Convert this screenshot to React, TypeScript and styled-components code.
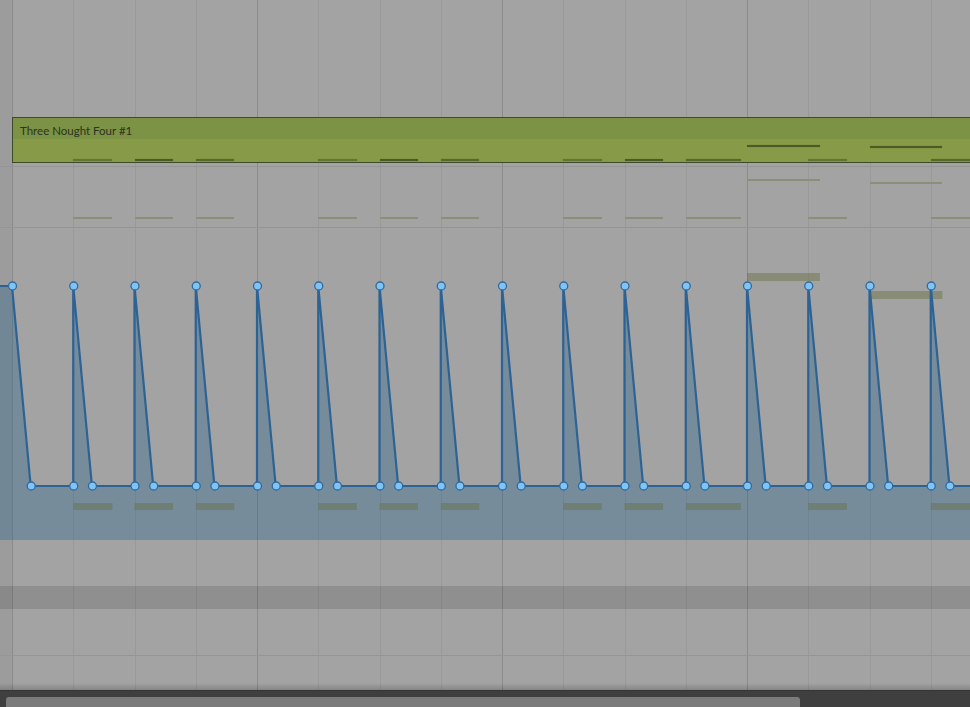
import React from 'react';
import styled, { createGlobalStyle } from 'styled-components';

const BEAT = 61.25;
const ORIGIN = 12;
const WIDTH = 970;

const GlobalStyle = createGlobalStyle`
  html, body {
    margin: 0;
    padding: 0;
    background: #a3a3a3;
    overflow: hidden;
  }
  #root {
    width: ${WIDTH}px;
    height: 707px;
  }
`;

type Note = { beat: number; len: number; pitch: 'low' | 'high' | 'higher'; vel: number };

const notes: Note[] = [
  { beat: 1, len: 0.64, pitch: 'low', vel: 0.6 },
  { beat: 2, len: 0.63, pitch: 'low', vel: 1 },
  { beat: 3, len: 0.63, pitch: 'low', vel: 0.8 },
  { beat: 5, len: 0.63, pitch: 'low', vel: 0.6 },
  { beat: 6, len: 0.63, pitch: 'low', vel: 1 },
  { beat: 7, len: 0.63, pitch: 'low', vel: 0.8 },
  { beat: 9, len: 0.63, pitch: 'low', vel: 0.6 },
  { beat: 10, len: 0.63, pitch: 'low', vel: 1 },
  { beat: 11, len: 0.9, pitch: 'low', vel: 0.8 },
  { beat: 12, len: 1.19, pitch: 'high', vel: 1 },
  { beat: 13, len: 0.63, pitch: 'low', vel: 0.6 },
  { beat: 14, len: 1.19, pitch: 'higher', vel: 1 },
  { beat: 15, len: 0.9, pitch: 'low', vel: 0.8 },
];

const Arrangement = styled.div`
  width: ${WIDTH}px;
  height: 707px;
  display: flex;
  flex-direction: column;
  background-color: #a3a3a3;
  background-image:
    linear-gradient(to right, #9c9c9c 0, #9c9c9c ${ORIGIN}px, transparent ${ORIGIN}px),
    linear-gradient(to right,
      #8b8b8b 0, #8b8b8b 1px, transparent 1px,
      transparent ${BEAT}px, #999999 ${BEAT}px, #999999 ${BEAT + 1}px, transparent ${BEAT + 1}px,
      transparent ${BEAT * 2}px, #999999 ${BEAT * 2}px, #999999 ${BEAT * 2 + 1}px, transparent ${BEAT * 2 + 1}px,
      transparent ${BEAT * 3}px, #999999 ${BEAT * 3}px, #999999 ${BEAT * 3 + 1}px, transparent ${BEAT * 3 + 1}px);
  background-size: 100% 100%, ${BEAT * 4}px 100%;
  background-position: 0 0, ${ORIGIN}px 0;
  background-repeat: no-repeat, repeat-x;
  font-family: Lato, 'Liberation Sans', sans-serif;
`;

const Lane = styled.div<{ h: number; line?: boolean }>`
  position: relative;
  flex: 0 0 ${p => p.h}px;
  height: ${p => p.h}px;
  border-bottom: ${p => (p.line ? '1px solid #959595' : 'none')};
`;

const ClipLane = styled(Lane)`
  padding-left: ${ORIGIN}px;
  box-sizing: content-box;
`;

const Clip = styled.div`
  height: 46px;
  width: ${WIDTH - ORIGIN}px;
  box-sizing: border-box;
  border: 1px solid #3f4a2d;
  border-right: none;
  display: flex;
  flex-direction: column;
  background: #879a47;
`;

const ClipHeader = styled.div`
  flex: 0 0 21px;
  box-sizing: border-box;
  padding: 6px 0 0 7px;
  background: #7c9244;
  color: #2c331f;
  font-size: 11.5px;
  line-height: 14px;
`;

const ClipBody = styled.div`
  position: relative;
  flex: 1;
`;

const ClipNote = styled.div<{ vel: number }>`
  position: absolute;
  height: 2px;
  background: #4a5c26;
  opacity: ${p => p.vel};
  box-shadow: 0 0 1px rgba(60, 75, 30, 0.5);
`;

const GhostNote = styled.div`
  position: absolute;
  height: 2px;
  background: #8a8f77;
`;

const Band = styled(Lane)`
  background: rgba(0, 0, 0, 0.12);
`;

const ShadowLane = styled(Lane)`
  &::after {
    content: '';
    position: absolute;
    left: 0;
    right: 0;
    bottom: 0;
    height: 7px;
    background: linear-gradient(to bottom, rgba(0, 0, 0, 0), rgba(0, 0, 0, 0.18));
  }
`;

const ScrollTrack = styled.div`
  flex: 0 0 17px;
  background: #3f3f3f;
  border-top: 1px solid #353535;
  box-sizing: border-box;
  display: flex;
  align-items: flex-end;
  padding-left: 6px;
`;

const ScrollThumb = styled.div`
  width: 794px;
  height: 10px;
  background: #7b7b7b;
  border-radius: 3px 3px 0 0;
`;

const Envelope = styled.svg`
  display: block;
`;

const clipY = { low: 20, high: 6, higher: 7 };
const ghostY = { low: 50, high: 12, higher: 15 };
const laneY = { low: 275, high: 45, higher: 63 };
const laneH = { low: 7, high: 8, higher: 8 };

const TOP = 58;
const BOTTOM = 258;
const FALL = 18.7;

function envelopePoints(): [number, number][] {
  const pts: [number, number][] = [[0, TOP], [ORIGIN, TOP], [ORIGIN + FALL, BOTTOM]];
  for (let k = 1; k <= 15; k++) {
    const x = ORIGIN + BEAT * k;
    pts.push([x, BOTTOM], [x, TOP], [x + FALL, BOTTOM]);
  }
  return pts;
}

const AutomationLane: React.FC = () => {
  const pts = envelopePoints();
  const line = [...pts, [WIDTH, BOTTOM] as [number, number]].map(p => p.join(',')).join(' ');
  const fill = `${line} ${WIDTH},312 0,312`;
  return (
    <Lane h={312}>
      <Envelope width={WIDTH} height={312} viewBox={`0 0 ${WIDTH} 312`}>
        <polygon points={fill} fill="rgba(38, 98, 140, 0.35)" />
        {notes.map(n => (
          <rect
            key={n.beat}
            x={ORIGIN + BEAT * n.beat}
            y={laneY[n.pitch]}
            width={BEAT * n.len}
            height={laneH[n.pitch]}
            fill="rgba(100, 110, 60, 0.42)"
          />
        ))}
        <polyline points={line} fill="none" stroke="#2c6294" strokeWidth={2.2} strokeLinejoin="round" />
        {pts.slice(1).map(([x, y], i) => (
          <circle key={i} cx={x + 0.5} cy={y} r={4} fill="#80c4f6" stroke="#2f6a9e" strokeWidth={1.3} />
        ))}
      </Envelope>
    </Lane>
  );
};

const App: React.FC = () => (
  <>
    <GlobalStyle />
    <Arrangement>
      <Lane h={117} />
      <ClipLane h={49} line>
        <Clip>
          <ClipHeader>Three Nought Four #1</ClipHeader>
          <ClipBody>
            {notes.map(n => (
              <ClipNote
                key={n.beat}
                vel={n.vel}
                style={{ left: BEAT * n.beat - 1, top: clipY[n.pitch], width: BEAT * n.len }}
              />
            ))}
          </ClipBody>
        </Clip>
      </ClipLane>
      <Lane h={60} line>
        {notes.map(n => (
          <GhostNote
            key={n.beat}
            style={{ left: ORIGIN + BEAT * n.beat, top: ghostY[n.pitch], width: BEAT * n.len }}
          />
        ))}
      </Lane>
      <AutomationLane />
      <Lane h={46} />
      <Band h={23} />
      <Lane h={46} line />
      <ShadowLane h={34} />
      <ScrollTrack>
        <ScrollThumb />
      </ScrollTrack>
    </Arrangement>
  </>
);

export default App;
